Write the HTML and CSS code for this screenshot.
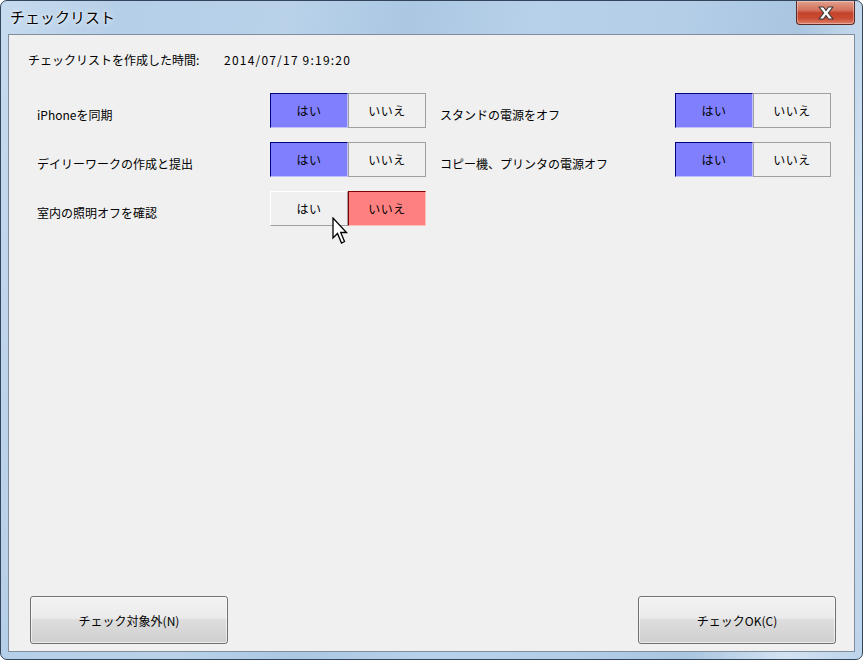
FILE: index.html
```html
<!DOCTYPE html>
<html>
  <head>
    <meta charset="utf-8">
    <title>チェックリスト</title>
    <link rel="stylesheet" href="styles.css">
  </head>
  <body>
    <div class="window">
      <div class="titlebar">
        <span class="title">チェックリスト</span>
        <button class="close-btn">
          <svg width="24" height="16" viewBox="0 0 24 16">
            <path d="M5 2 L9.5 2 L12 5.5 L14.5 2 L19 2 L14.3 8 L19 14 L14.5 14 L12 10.5 L9.5 14 L5 14 L9.7 8 Z" fill="#fff" stroke="#3a3a3a" stroke-width="1.2" stroke-linejoin="round"/>
          </svg>
        </button>
      </div>
      <div class="client">
        <div class="created">
          <span class="created-label">チェックリストを作成した時間:</span>
          <span class="created-value">2014/07/17 9:19:20</span>
        </div>
        <div class="items">
          <div class="item">
            <span class="label">iPhoneを同期</span>
            <div class="choice">
              <button class="opt yes on">はい</button>
              <button class="opt">いいえ</button>
            </div>
          </div>
          <div class="item">
            <span class="label">スタンドの電源をオフ</span>
            <div class="choice">
              <button class="opt yes on">はい</button>
              <button class="opt">いいえ</button>
            </div>
          </div>
          <div class="item">
            <span class="label">デイリーワークの作成と提出</span>
            <div class="choice">
              <button class="opt yes on">はい</button>
              <button class="opt">いいえ</button>
            </div>
          </div>
          <div class="item">
            <span class="label">コピー機、プリンタの電源オフ</span>
            <div class="choice">
              <button class="opt yes on">はい</button>
              <button class="opt">いいえ</button>
            </div>
          </div>
          <div class="item">
            <span class="label">室内の照明オフを確認</span>
            <div class="choice">
              <button class="opt hover">はい</button>
              <button class="opt no on">いいえ</button>
              <svg class="cursor" width="16" height="28" viewBox="0 0 16 28">
                <path d="M1 1 L1 21 L5.5 16.5 L9.5 26 L12.5 24.5 L8.7 15.5 L14.5 15.5 Z" fill="#fff" stroke="#000" stroke-width="1.3" stroke-linejoin="miter"/>
              </svg>
            </div>
          </div>
        </div>
        <div class="footer">
          <button class="push">チェック対象外(N)</button>
          <button class="push">チェックOK(C)</button>
        </div>
      </div>
    </div>
  </body>
</html>
```

FILE: styles.css
```css
:root {
  --face: #f0f0f0;
  --frame-edge: #33455a;
  --client-edge: #7f8d9c;
  --yes-color: #8080ff;
  --no-color: #ff8080;
}

*, *:before, *:after {
  box-sizing: border-box;
}

html, body {
  margin: 0;
  padding: 0;
  height: 100%;
}

body {
  font-family: "Noto Sans CJK JP", "DejaVu Sans", sans-serif;
  font-size: 12px;
  color: #000;
  background: #fff;
}

button {
  font-family: inherit;
  font-size: 12px;
  color: #000;
  padding: 0;
  margin: 0;
}

/*----- WINDOW FRAME -----*/

.window {
  width: 863px;
  height: 660px;
  display: flex;
  flex-direction: column;
  border: 1px solid var(--frame-edge);
  border-radius: 7px;
  overflow: hidden;
  background:
    linear-gradient(100deg, #c6dbee 0%, #b6cfe8 12%, #b9d2ea 30%, #abc7e2 42%, #b8d1ea 55%, #b4cee8 70%, #a9c5e0 82%, #d3e3f2 92%, #bcd3ea 100%);
}

.titlebar {
  height: 33px;
  display: flex;
  align-items: flex-start;
  justify-content: space-between;
  flex: 0 0 auto;
}

.title {
  font-size: 15px;
  line-height: 20px;
  padding: 6px 0 0 9px;
  text-shadow: 0 0 6px rgba(255,255,255,0.9), 0 0 2px rgba(255,255,255,0.9);
}

.close-btn {
  width: 59px;
  height: 24px;
  margin-right: 7px;
  border: 1px solid #5a2a22;
  border-top: none;
  border-radius: 0 0 4px 4px;
  background: linear-gradient(to bottom, #e2a08e 0%, #d4715b 40%, #c4422b 52%, #c94a32 75%, #e0806a 100%);
  box-shadow: inset 0 0 0 1px rgba(255,255,255,0.35);
  display: flex;
  align-items: center;
  justify-content: center;
}

.client {
  flex: 1 1 auto;
  margin: 0 7px 7px 7px;
  background: var(--face);
  border: 1px solid var(--client-edge);
  display: flex;
  flex-direction: column;
  padding: 17px 18px 7px 21px;
}

/*----- CONTENT -----*/

.created {
  line-height: 16px;
  margin-left: -2px;
}

.created-value {
  margin-left: 22px;
  letter-spacing: 1.2px;
}

.items {
  margin-top: 25px;
  display: grid;
  grid-template-columns: 396px 393px;
  column-gap: 14px;
  row-gap: 14px;
}

.item {
  display: flex;
  align-items: flex-start;
  height: 35px;
}

.item .label {
  width: 240px;
  padding: 14px 0 0 7px;
  line-height: 16px;
  white-space: nowrap;
}

.item:nth-child(even) .label {
  width: 235px;
  padding-left: 0;
}

.choice {
  position: relative;
  display: flex;
}

.opt {
  width: 78px;
  height: 35px;
  background: var(--face);
  border: 1px solid #a0a0a0;
  letter-spacing: 0.5px;
}

.opt.hover {
  border-color: #fff #a0a0a0 #a0a0a0 #fff;
}

.opt.yes.on {
  background: var(--yes-color);
  border-color: #000080 #c0c0ff #c0c0ff #000080;
}

.opt.no.on {
  background: var(--no-color);
  border-color: #800000 #ffc0c0 #ffc0c0 #800000;
}

.cursor {
  position: absolute;
  left: 62px;
  top: 26px;
}

/*----- FOOTER -----*/

.footer {
  margin-top: auto;
  display: flex;
  justify-content: space-between;
}

.push {
  width: 198px;
  height: 48px;
  border: 1px solid #707070;
  border-radius: 3px;
  background: linear-gradient(to bottom, #f2f2f2 0%, #ebebeb 45%, #dddddd 50%, #cfcfcf 100%);
  box-shadow: inset 0 0 0 1px rgba(255,255,255,0.6);
}
```
